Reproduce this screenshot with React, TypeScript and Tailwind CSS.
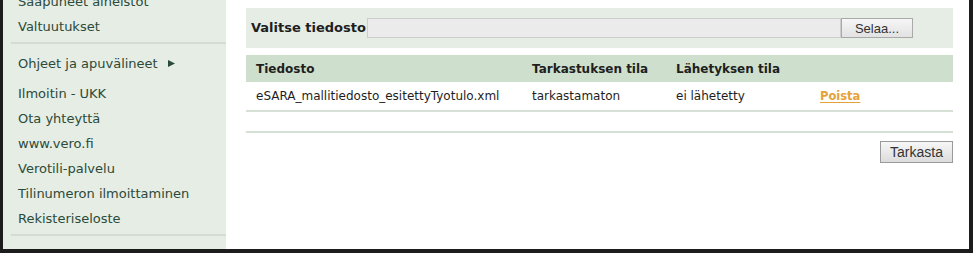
import React from "react";

const sideFont = { fontFamily: '"DejaVu Sans", Verdana, sans-serif' };

function SideItem({ children }: { children: React.ReactNode }) {
  return (
    <div className="h-[25px] flex items-center pl-[15px] text-[13px] text-[#2c4a39]" style={sideFont}>
      {children}
    </div>
  );
}

export default function App() {
  return (
    <div className="w-[973px] h-[253px] overflow-hidden flex bg-white border-l-[3px] border-r-[4px] border-b-[4px] border-[#1c1c1c]">
      <div className="w-[223px] shrink-0 bg-[#e5ede5] flex flex-col">
        <div className="mt-[-11px]">
          <SideItem>Saapuneet aineistot</SideItem>
          <SideItem>Valtuutukset</SideItem>
        </div>
        <div className="mt-[3px] ml-[8px] h-[2px] bg-[#d4ddd4]" />
        <div className="mt-[7px]">
          <SideItem>
            <span>Ohjeet ja apuvälineet</span>
            <svg width="7" height="7" viewBox="0 0 7 7" className="ml-[10px]">
              <polygon points="0,0 7,3.5 0,7" fill="#2c4a39" />
            </svg>
          </SideItem>
        </div>
        <div className="mt-[5px]">
          <SideItem>Ilmoitin - UKK</SideItem>
          <SideItem>Ota yhteyttä</SideItem>
          <SideItem>www.vero.fi</SideItem>
          <SideItem>Verotili-palvelu</SideItem>
          <SideItem>Tilinumeron ilmoittaminen</SideItem>
          <SideItem>Rekisteriseloste</SideItem>
        </div>
        <div className="mt-[3px] ml-[8px] h-[2px] bg-[#d4ddd4]" />
      </div>

      <div className="flex-1 pl-[20px] pr-[16px] pt-[8px] text-[12px] text-[#1e1e1e]" style={sideFont}>
        <div className="h-[40px] bg-[#e5ede5] flex items-center pl-[5px] pr-[40px]">
          <span className="font-bold text-[13px] text-[#1e1e1e] w-[116px]">Valitse tiedosto</span>
          <div className="flex-1 h-[20px] bg-[#ebebeb] border border-[#cdcdcd]" />
          <button
            className="w-[72px] h-[20px] border border-[#a9a9a9] bg-gradient-to-b from-[#f6f6f6] to-[#e2e2e2] text-[13px] text-[#333]"
            style={{ fontFamily: '"Liberation Sans", Arial, sans-serif' }}
          >
            Selaa...
          </button>
        </div>

        <div className="mt-[7px] h-[27px] bg-[#cee0cd] flex items-center font-bold text-[12px]">
          <div className="w-[276px] pl-[10px]">Tiedosto</div>
          <div className="w-[144px] pl-[10px]">Tarkastuksen tila</div>
          <div className="w-[144px] pl-[10px]">Lähetyksen tila</div>
          <div className="flex-1" />
        </div>
        <div className="h-[28px] flex items-center">
          <div className="w-[276px] pl-[10px]">eSARA_mallitiedosto_esitettyTyotulo.xml</div>
          <div className="w-[144px] pl-[10px]">tarkastamaton</div>
          <div className="w-[144px] pl-[10px]">ei lähetetty</div>
          <div className="flex-1 pl-[10px]">
            <span className="font-bold text-[11.5px] text-[#e6a23a] underline underline-offset-2">Poista</span>
          </div>
        </div>
        <div className="h-[2px] bg-[#d6e0d6]" />
        <div className="mt-[19px] h-[2px] bg-[#d6e0d6]" />
        <div className="mt-[8px] flex justify-end">
          <button
            className="w-[73px] h-[22px] border border-[#9a9a9a] bg-gradient-to-b from-[#f7f7f7] to-[#dcdcdc] text-[14px] text-[#333]"
            style={{ fontFamily: '"Liberation Sans", Arial, sans-serif' }}
          >
            Tarkasta
          </button>
        </div>
      </div>
    </div>
  );
}
